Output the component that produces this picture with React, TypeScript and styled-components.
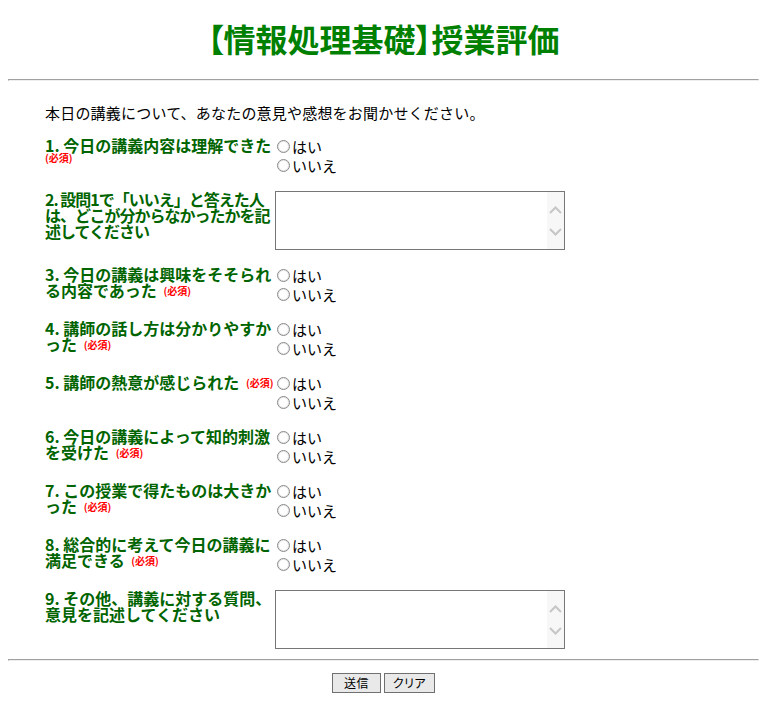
import React from "react";
import styled, { createGlobalStyle } from "styled-components";

const GlobalStyle = createGlobalStyle`
  html, body { background: #ffffff; }
  body {
    margin: 8px;
    font-family: "Noto Sans CJK JP", "Noto Sans", sans-serif;
    color: #000000;
  }
`;

const Title = styled.h1`
  margin: 10px 0 21px;
  font-size: 32px;
  line-height: 40px;
  font-weight: 700;
  color: #008000;
  text-align: center;
  font-feature-settings: "palt";
`;

const Rule = styled.hr<{ $gapTop?: number }>`
  margin: ${(p) => p.$gapTop ?? 0}px 0 0;
  height: 0;
  border-style: solid;
  border-width: 1px;
  border-color: #a0a0a0 #eeeeee #eeeeee #a0a0a0;
`;

const Form = styled.form`
  display: block;
  padding-left: 37px;
`;

const Intro = styled.p`
  margin: 22px 0 14px;
  font-size: 15px;
  line-height: 20px;
  letter-spacing: 0.2px;
`;

const QuestionList = styled.div`
  display: flex;
  flex-direction: column;
  gap: 16px;
`;

const Row = styled.div`
  display: grid;
  grid-template-columns: 230px auto;
  align-items: start;
`;

const Label = styled.div<{ $tight?: boolean }>`
  font-size: 16px;
  line-height: 16px;
  font-weight: 700;
  color: #006400;
  letter-spacing: ${(p) => (p.$tight ? "-1px" : "0")};
`;

const LabelLine = styled.span`
  display: block;
  white-space: nowrap;
`;

const Badge = styled.span<{ $block?: boolean }>`
  display: ${(p) => (p.$block ? "block" : "inline")};
  margin-left: ${(p) => (p.$block ? "0" : "3px")};
  font-size: 10px;
  line-height: ${(p) => (p.$block ? "10px" : "inherit")};
  font-weight: 700;
  color: #ff0000;
  vertical-align: ${(p) => (p.$block ? "baseline" : "2px")};
  letter-spacing: 0;
`;

const Choices = styled.div`
  display: flex;
  flex-direction: column;
`;

const RadioLine = styled.label`
  display: flex;
  align-items: center;
  height: 19px;
  font-size: 15px;
  line-height: 19px;
  color: #000000;
`;

const RadioInput = styled.input`
  appearance: none;
  width: 13px;
  height: 13px;
  margin: 0 2px 0 2px;
  border: 1px solid #8a8a8a;
  border-radius: 50%;
  background: #ffffff;
  box-shadow: inset 0 0 0 1px #e6e6e6;
  box-sizing: border-box;
`;

const TextBox = styled.div`
  position: relative;
  width: 290px;
  height: 59px;
`;

const Area = styled.textarea`
  display: block;
  width: 100%;
  height: 100%;
  box-sizing: border-box;
  margin: 0;
  padding: 2px;
  border: 1px solid #767676;
  resize: none;
  font-family: "Noto Sans CJK JP", sans-serif;
  font-size: 13px;
  outline: none;
`;

const ScrollTrack = styled.div`
  position: absolute;
  top: 1px;
  right: 1px;
  bottom: 1px;
  width: 17px;
  background: #f7f7f7;
  pointer-events: none;
`;

const Chevron = styled.svg<{ $top: number }>`
  position: absolute;
  left: 2px;
  top: ${(p) => p.$top}px;
  width: 13px;
  height: 8px;
`;

const ButtonBar = styled.div`
  display: flex;
  justify-content: center;
  gap: 3px;
  margin-top: 12px;
`;

const Button = styled.button<{ $width: number }>`
  width: ${(p) => p.$width}px;
  height: 20px;
  padding: 0;
  box-sizing: border-box;
  border: 1px solid #707070;
  background: #e9e9e9;
  font-family: "Noto Sans CJK JP", sans-serif;
  font-size: 12px;
  line-height: 18px;
  font-feature-settings: "palt";
  letter-spacing: 0.5px;
  color: #000000;
  text-align: center;
`;

type Question =
  | { kind: "radio"; lines: string[]; required: boolean; badgeBlock?: boolean }
  | { kind: "text"; lines: string[]; tight?: boolean };

const questions: Question[] = [
  { kind: "radio", lines: ["1. 今日の講義内容は理解できた"], required: true, badgeBlock: true },
  {
    kind: "text",
    lines: ["2. 設問1で「いいえ」と答えた人", "は、どこが分からなかったかを記", "述してください"],
    tight: true,
  },
  { kind: "radio", lines: ["3. 今日の講義は興味をそそられ", "る内容であった"], required: true },
  { kind: "radio", lines: ["4. 講師の話し方は分かりやすか", "った"], required: true },
  { kind: "radio", lines: ["5. 講師の熱意が感じられた"], required: true },
  { kind: "radio", lines: ["6. 今日の講義によって知的刺激", "を受けた"], required: true },
  { kind: "radio", lines: ["7. この授業で得たものは大きか", "った"], required: true },
  { kind: "radio", lines: ["8. 総合的に考えて今日の講義に", "満足できる"], required: true },
  { kind: "text", lines: ["9. その他、講義に対する質問、", "意見を記述してください"] },
];

function TextField() {
  return (
    <TextBox>
      <Area />
      <ScrollTrack>
        <Chevron $top={14} viewBox="0 0 13 8">
          <path d="M1 7 L6.5 1.5 L12 7" fill="none" stroke="#c6c6c6" strokeWidth="2" />
        </Chevron>
        <Chevron $top={36} viewBox="0 0 13 8">
          <path d="M1 1 L6.5 6.5 L12 1" fill="none" stroke="#c6c6c6" strokeWidth="2" />
        </Chevron>
      </ScrollTrack>
    </TextBox>
  );
}

function QuestionRow({ q, index }: { q: Question; index: number }) {
  const name = `q${index + 1}`;
  const last = q.lines.length - 1;
  return (
    <Row>
      <Label $tight={q.kind === "text" && q.tight}>
        {q.lines.map((line, i) => (
          <LabelLine key={i}>
            {line}
            {q.kind === "radio" && q.required && !q.badgeBlock && i === last && (
              <>
                {" "}
                <Badge>(必須)</Badge>
              </>
            )}
          </LabelLine>
        ))}
        {q.kind === "radio" && q.required && q.badgeBlock && <Badge $block>(必須)</Badge>}
      </Label>
      {q.kind === "radio" ? (
        <Choices>
          <RadioLine>
            <RadioInput type="radio" name={name} value="yes" />
            はい
          </RadioLine>
          <RadioLine>
            <RadioInput type="radio" name={name} value="no" />
            いいえ
          </RadioLine>
        </Choices>
      ) : (
        <TextField />
      )}
    </Row>
  );
}

export default function App() {
  return (
    <>
      <GlobalStyle />
      <Title>【情報処理基礎】授業評価</Title>
      <Rule />
      <Form onSubmit={(e) => e.preventDefault()}>
        <Intro>本日の講義について、あなたの意見や感想をお聞かせください。</Intro>
        <QuestionList>
          {questions.map((q, i) => (
            <QuestionRow key={i} q={q} index={i} />
          ))}
        </QuestionList>
      </Form>
      <Rule $gapTop={10} />
      <ButtonBar>
        <Button type="submit" $width={49}>送信</Button>
        <Button type="reset" $width={51}>クリア</Button>
      </ButtonBar>
    </>
  );
}
